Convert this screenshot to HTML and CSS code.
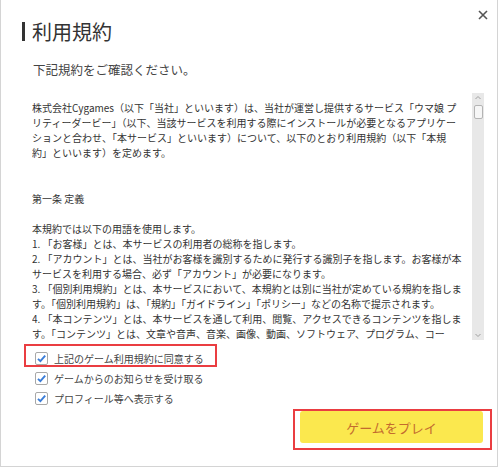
FILE: index.html
```html
<!DOCTYPE html>
<html lang="ja">
<head>
    <meta charset="UTF-8">
    <meta name="viewport" content="width=device-width, initial-scale=1.0">
    <title>利用規約</title>
    <link rel="stylesheet" href="styles.css">
</head>
<body>
    <div class="dialog">
        <div class="dialog-header">
            <h1 class="dialog-title">利用規約</h1>
            <button class="close-btn" aria-label="閉じる">
                <svg width="10" height="10" viewBox="0 0 10 10">
                    <path d="M1 1 L9 9 M9 1 L1 9" stroke="#555" stroke-width="1.6" fill="none"/>
                </svg>
            </button>
        </div>
        <p class="lead">下記規約をご確認ください。</p>

        <div class="terms">
            <div class="terms-text">
                <p>株式会社Cygames（以下「当社」といいます）は、当社が運営し提供するサービス「ウマ娘 プ<br>リティーダービー」（以下、当該サービスを利用する際にインストールが必要となるアプリケー<br>ションと合わせ、「本サービス」といいます）について、以下のとおり利用規約（以下「本規<br>約」といいます）を定めます。</p>
                <p class="gap2">第一条 定義</p>
                <p class="gap1">本規約では以下の用語を使用します。<br>
                1. 「お客様」とは、本サービスの利用者の総称を指します。<br>
                2. 「アカウント」とは、当社がお客様を識別するために発行する識別子を指します。お客様が本<br>サービスを利用する場合、必ず「アカウント」が必要になります。<br>
                3. 「個別利用規約」とは、本サービスにおいて、本規約とは別に当社が定めている規約を指しま<br>す。「個別利用規約」は、「規約」「ガイドライン」「ポリシー」などの名称で提示されます。<br>
                4. 「本コンテンツ」とは、本サービスを通して利用、閲覧、アクセスできるコンテンツを指しま<br>す。「コンテンツ」とは、文章や音声、音楽、画像、動画、ソフトウェア、プログラム、コー</p>
            </div>
            <div class="scrollbar">
                <svg class="arrow" width="12" height="8" viewBox="0 0 12 8">
                    <path d="M3.5 5 L6 2.5 L8.5 5" stroke="#a0a0a0" stroke-width="1" fill="none"/>
                </svg>
                <div class="thumb"></div>
                <div class="track-fill"></div>
                <svg class="arrow" width="12" height="8" viewBox="0 0 12 8">
                    <path d="M3.5 3 L6 5.5 L8.5 3" stroke="#a0a0a0" stroke-width="1" fill="none"/>
                </svg>
            </div>
        </div>

        <div class="footer">
            <div class="options">
                <label class="option agree">
                    <span class="check"><svg width="11" height="11" viewBox="0 0 11 11"><path d="M2 5.8 L4.4 8.2 L9.2 2.6" stroke="#3b7dd8" stroke-width="1.9" fill="none"/></svg></span>
                    上記のゲーム利用規約に同意する
                </label>
                <label class="option">
                    <span class="check"><svg width="11" height="11" viewBox="0 0 11 11"><path d="M2 5.8 L4.4 8.2 L9.2 2.6" stroke="#3b7dd8" stroke-width="1.9" fill="none"/></svg></span>
                    ゲームからのお知らせを受け取る
                </label>
                <label class="option">
                    <span class="check"><svg width="11" height="11" viewBox="0 0 11 11"><path d="M2 5.8 L4.4 8.2 L9.2 2.6" stroke="#3b7dd8" stroke-width="1.9" fill="none"/></svg></span>
                    プロフィール等へ表示する
                </label>
            </div>
            <button class="play-btn">ゲームをプレイ</button>
        </div>
    </div>
</body>
</html>
```

FILE: styles.css
```css
body {
    margin: 0;
    background: #fff;
    font-family: "Noto Sans CJK JP", "Noto Sans", sans-serif;
    color: #333;
}
.dialog {
    width: 498px;
    height: 467px;
    box-sizing: border-box;
    border: 1px solid #d4d4d4;
    border-top: none;
    background: #fff;
    overflow: hidden;
}
.dialog-header {
    display: flex;
    justify-content: space-between;
    align-items: flex-start;
    padding-top: 10px;
}
.dialog-title {
    margin: 12px 0 0 21px;
    padding-left: 7px;
    border-left: 3px solid #333;
    font-size: 20px;
    line-height: 19px;
    font-weight: normal;
    color: #333;
}
.close-btn {
    margin-right: 9px;
    padding: 0;
    border: none;
    background: none;
    width: 10px;
    height: 10px;
    display: flex;
}
.lead {
    margin: 21px 0 0 32px;
    font-size: 12.5px;
    line-height: 16px;
    color: #444;
}
.terms {
    display: flex;
    margin: 15px 0 0 31px;
    width: 452px;
    height: 247px;
}
.terms-text {
    flex: 1;
    overflow: hidden;
    padding-top: 7px;
    font-size: 10px;
    line-height: 15.1px;
    white-space: nowrap;
    color: #333;
}
.terms-text p {
    margin: 0;
}
.terms-text .gap2 {
    margin-top: 30.2px;
}
.terms-text .gap1 {
    margin-top: 15.1px;
}
.scrollbar {
    width: 12px;
    background: #e8e8e8;
    display: flex;
    flex-direction: column;
    align-items: center;
}
.arrow {
    display: block;
    margin: 1px 0;
}
.thumb {
    margin-top: 2px;
    width: 9px;
    height: 14px;
    box-sizing: border-box;
    border: 1px solid #b4b4b4;
    border-radius: 2px;
    background: #f6f6f6;
}
.track-fill {
    flex: 1;
}
.footer {
    display: flex;
    flex-direction: column;
}
.options {
    margin: 8px 0 0 23px;
    display: flex;
    flex-direction: column;
}
.option {
    position: relative;
    display: flex;
    align-items: center;
    gap: 6px;
    height: 20px;
    padding-left: 11px;
    font-size: 10px;
    color: #444;
}
.option.agree::after {
    content: "";
    position: absolute;
    left: 0;
    top: -4px;
    width: 193px;
    height: 23px;
    box-sizing: border-box;
    border: 2px solid #ea3d41;
}
.check {
    width: 13px;
    height: 13px;
    box-sizing: border-box;
    border: 1px solid #a8a8a8;
    border-radius: 2px;
    background: #fff;
    display: flex;
    align-items: center;
    justify-content: center;
}
.check svg {
    display: block;
}
.play-btn {
    position: relative;
    align-self: flex-end;
    margin: 3px 14px 0 0;
    width: 183px;
    height: 32px;
    border: none;
    border-radius: 3px;
    background: #fbe84e;
    color: #c36b2e;
    font-family: "Noto Sans CJK JP", "Noto Sans", sans-serif;
    font-size: 13px;
}
.play-btn::after {
    content: "";
    position: absolute;
    left: -7px;
    top: -2px;
    right: -9px;
    bottom: -7px;
    border: 2px solid #ea3d41;
}
```
